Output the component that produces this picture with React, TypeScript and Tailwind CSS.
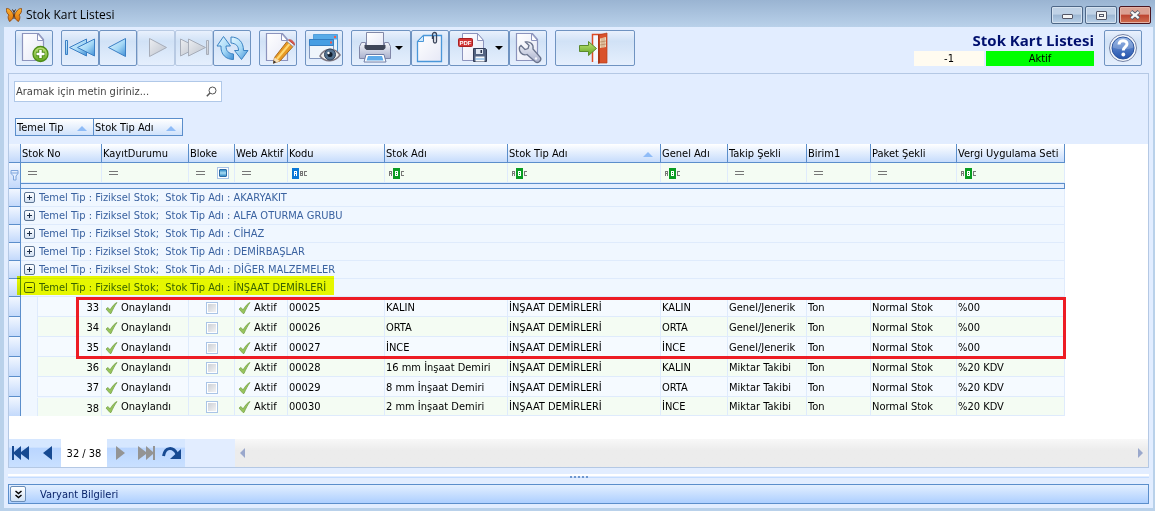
import React from "react";

type Kind = "eq" | "abcStart" | "abcMid" | "eqCheck";

const columns: { label: string; width: string; filter: Kind; sorted?: boolean }[] = [
  { label: "Stok No", width: "w-[81px]", filter: "eq" },
  { label: "KayıtDurumu", width: "w-[87px]", filter: "eq" },
  { label: "Bloke", width: "w-[46px]", filter: "eqCheck" },
  { label: "Web Aktif", width: "w-[53px]", filter: "eq" },
  { label: "Kodu", width: "w-[97px]", filter: "abcStart" },
  { label: "Stok Adı", width: "w-[123px]", filter: "abcMid" },
  { label: "Stok Tip Adı", width: "w-[153px]", filter: "abcMid", sorted: true },
  { label: "Genel Adı", width: "w-[67px]", filter: "abcMid" },
  { label: "Takip Şekli", width: "w-[79px]", filter: "eq" },
  { label: "Birim1", width: "w-[64px]", filter: "eq" },
  { label: "Paket Şekli", width: "w-[86px]", filter: "eq" },
  { label: "Vergi Uygulama Seti", width: "w-[108px]", filter: "abcMid" },
];

const groups = ["AKARYAKIT", "ALFA OTURMA GRUBU", "CİHAZ", "DEMİRBAŞLAR", "DİĞER MALZEMELER", "İNŞAAT DEMİRLERİ"];

const rows = [
  { no: 33, code: "00025", name: "KALIN", general: "KALIN", track: "Genel/Jenerik", tax: "%00" },
  { no: 34, code: "00026", name: "ORTA", general: "ORTA", track: "Genel/Jenerik", tax: "%00" },
  { no: 35, code: "00027", name: "İNCE", general: "İNCE", track: "Genel/Jenerik", tax: "%00" },
  { no: 36, code: "00028", name: "16 mm İnşaat Demiri", general: "KALIN", track: "Miktar Takibi", tax: "%20 KDV" },
  { no: 37, code: "00029", name: "8 mm İnşaat Demiri", general: "ORTA", track: "Miktar Takibi", tax: "%20 KDV" },
  { no: 38, code: "00030", name: "2 mm İnşaat Demiri", general: "İNCE", track: "Miktar Takibi", tax: "%20 KDV" },
];

function Gradients() {
  return (
    <svg width="0" height="0" className="absolute" aria-hidden="true">
      <defs>
        <linearGradient id="blue" x1="0" y1="0" x2="1" y2="1">
          <stop offset="0" stopColor="#e4f7ff" />
          <stop offset="0.55" stopColor="#a5d8f6" />
          <stop offset="1" stopColor="#3f8fd6" />
        </linearGradient>
        <linearGradient id="gray" x1="0" y1="0" x2="1" y2="1">
          <stop offset="0" stopColor="#eceef2" />
          <stop offset="1" stopColor="#bcc2cc" />
        </linearGradient>
        <linearGradient id="paper" x1="0" y1="0" x2="1" y2="1">
          <stop offset="0" stopColor="#ffffff" />
          <stop offset="1" stopColor="#e6e8f6" />
        </linearGradient>
        <linearGradient id="green" x1="0" y1="0" x2="0" y2="1">
          <stop offset="0" stopColor="#c3e57c" />
          <stop offset="1" stopColor="#5fa51d" />
        </linearGradient>
        <linearGradient id="metal" x1="0" y1="0" x2="0" y2="1">
          <stop offset="0" stopColor="#f4f6fb" />
          <stop offset="1" stopColor="#a9b0cc" />
        </linearGradient>
        <linearGradient id="help" x1="0" y1="0" x2="0" y2="1">
          <stop offset="0" stopColor="#7fa6e0" />
          <stop offset="1" stopColor="#2352ac" />
        </linearGradient>
        <linearGradient id="wing" x1="0" y1="0" x2="0" y2="1">
          <stop offset="0" stopColor="#ffb22e" />
          <stop offset="1" stopColor="#d9700c" />
        </linearGradient>
      </defs>
    </svg>
  );
}

function Icon({ children, w = 36 }: { children: React.ReactNode; w?: number }) {
  return (
    <svg width={w} height="34" viewBox={`0 0 ${w} 34`} aria-hidden="true" className="shrink-0">
      {children}
    </svg>
  );
}

const Page = () => (
  <>
    <path d="M6.5 2.5h16l5 6v21h-21z" fill="url(#paper)" stroke="#8c94bd" strokeWidth="1.2" />
    <path d="M21.500 2.500v7h6z" fill="#fff" stroke="#8c94bd" />
  </>
);

const NewIcon = () => (
  <Icon>
    <Page />
    <circle cx="24.500" cy="23" r="7.500" fill="url(#green)" stroke="#4c8b17" strokeWidth="1.300" />
    <path d="M24.500 18.500v9M20 23h9" stroke="#4c8b17" strokeWidth="4.500" />
    <path d="M24.500 19v8M20.500 23h8" stroke="#fff" strokeWidth="2.500" />
  </Icon>
);
const FirstIcon = () => (
  <Icon>
    <g fill="url(#blue)" stroke="#3b7fc4" strokeLinejoin="round">
      <path d="M3.500 9.500h2v14h-2z" />
      <path d="M24.500 8v17l-17-8.500z" />
      <path d="M32.500 8v17l-17-8.500z" />
    </g>
  </Icon>
);
const PrevIcon = () => (
  <Icon>
    <path d="M25.500 7.500v18l-17-9z" fill="url(#blue)" stroke="#3b7fc4" strokeLinejoin="round" />
  </Icon>
);
const NextIcon = () => (
  <Icon>
    <path d="M11.500 7.500v18l17-9z" fill="url(#gray)" stroke="#a7adb9" strokeLinejoin="round" />
  </Icon>
);
const LastIcon = () => (
  <Icon>
    <g fill="url(#gray)" stroke="#a7adb9" strokeLinejoin="round">
      <path d="M4.500 8v17l17-8.500z" />
      <path d="M12.500 8v17l17-8.500z" />
      <path d="M30.500 9.500h2v14h-2z" />
    </g>
  </Icon>
);
const RefreshIcon = () => (
  <Icon>
    <g fill="url(#blue)" stroke="#3b82c2" strokeLinejoin="round">
      <path d="M9.500 5.500l7 9.500h-4.500c0 5 2.500 7.500 7.500 8v5.500c-7.500 0-13-5-12.500-13.500h-4z" />
      <path d="M27.500 28.500l-7-9h4c0-4.500-2.500-7-7.500-7.500V6c7.500 0 12.500 5 12.500 13.500h4.500z" />
    </g>
  </Icon>
);
const EditIcon = () => (
  <Icon>
    <Page />
    <path d="M14.500 26.500L27 10.500l6 5L20 30l-6.500 2z" fill="#e89a24" stroke="#a86b22" />
    <path d="M17 28L29.500 13" stroke="#ffd873" strokeWidth="2" />
    <path d="M27 10.500l1.500-1.500 6 5-1.500 1.500z" fill="#eef0f4" stroke="#8890a8" strokeWidth="0.700" />
    <path d="M28.500 9c2-1.500 6.500 2 6 5z" fill="#e05548" stroke="#b8403a" strokeWidth="0.700" />
    <path d="M14.500 26.500L20 30l-6.500 2.500z" fill="#f6dfb4" />
    <path d="M13.800 29.500l2.500 1.800-3.300 1.500z" fill="#35302f" />
  </Icon>
);
const ViewIcon = () => (
  <Icon>
    <path d="M7.500 3.500h24v17h-24z" fill="#e2f1fb" stroke="#4c92ce" />
    <path d="M7.500 3.500h24v5h-24z" fill="#58abe8" />
    <path d="M3.500 8.500h24v19h-24z" fill="#eef5fb" stroke="#8096bd" />
    <path d="M3.500 8.500h24v6h-24z" fill="#459ee3" stroke="#347fc3" />
    <path d="M28 6h2M24 11.500h2" stroke="#f35b47" strokeWidth="2" />
    <path d="M14 25c4-8 15-9 20-1-5 7-15 8-20 1z" fill="#f2f0ef" stroke="#7c7680" strokeWidth="1.500" />
    <circle cx="24" cy="23.500" r="5.500" fill="#54718f" stroke="#31445d" />
    <circle cx="24" cy="23.500" r="2.500" fill="#111c2b" />
    <circle cx="22.500" cy="22" r="1.200" fill="#fff" />
  </Icon>
);
const PrintIcon = () => (
  <Icon w={40}>
    <path d="M9 15l3-5h16l3 5z" fill="#666c7d" />
    <path d="M6.500 11.500h4v6h19v-6h4l2 4v12h-31v-12z" fill="url(#metal)" stroke="#8187a8" />
    <path d="M11.500 1.500h17v14h-17z" fill="url(#paper)" stroke="#8289a8" />
    <path d="M9.500 14h21v3l-2 2h-17l-2-2z" fill="#3f4658" />
    <path d="M11 23.500h18l2 7.500H9z" fill="#fff" stroke="#6e7da6" />
    <path d="M13 25h14l1.500 4.500h-17z" fill="#5faae9" />
  </Icon>
);
const ClipIcon = () => (
  <Icon>
    <path d="M11.500 4.500h18v26h-24v-20z" fill="url(#paper)" stroke="#4a97d9" strokeWidth="1.300" />
    <path d="M5.500 10.500h6v-6z" fill="#cfe8fb" stroke="#4a97d9" />
    <path d="M20.500 8V3.500a2 2 0 0 1 4 0v7a1.500 1.500 0 0 1-3 0V5" fill="none" stroke="#39445a" strokeWidth="1.300" />
  </Icon>
);
const PdfIcon = () => (
  <Icon w={44}>
    <path d="M11.500 2.500h15l6 7v20h-21z" fill="url(#paper)" stroke="#8c94bd" />
    <path d="M26.500 2.500v7h6z" fill="#fff" stroke="#8c94bd" />
    <rect x="7.500" y="7.500" width="14" height="8" rx="1" fill="#d23636" stroke="#a92020" />
    <text x="14.500" y="14" textAnchor="middle" fontSize="6" fontWeight="700" fill="#fff" fontFamily="Liberation Sans, sans-serif">PDF</text>
    <path d="M22.500 17.500h12l1 1v12h-13z" fill="#526280" stroke="#323d57" />
    <path d="M25 18h7v5h-7z" fill="#dfe6f1" />
    <path d="M29.500 19h1.500v3h-1.500z" fill="#29334b" />
    <path d="M24.500 25.500h9v5h-9z" fill="#f6f8fb" />
    <path d="M24.500 27.500h9v1h-9z" fill="#59a1df" />
  </Icon>
);
const ToolIcon = () => (
  <Icon>
    <Page />
    <path d="M12 13.500l4 4 3-1 1-3-3.500-3.500c4-1 8.500 2 7.500 7l7.500 8.500c1.500 3-2.500 6-5 4.500l-8.500-7.500c-5 1.500-8.500-3-7.500-7.500z" transform="translate(-1 1)" fill="url(#metal)" stroke="#69738c" strokeWidth="1.300" />
    <circle cx="26" cy="27.500" r="1.200" fill="#f4f6fb" />
  </Icon>
);
const ExitIcon = () => (
  <Icon>
    <path d="M15.500 31V3.500h12V28" fill="#f3f8ff" stroke="#dd4b24" strokeWidth="1.500" />
    <path d="M22 4l8-2v30h-8z" fill="#d9532c" stroke="#b43c1b" strokeWidth="0.700" />
    <path d="M22 3l-1 1v29l2-1z" fill="#a93414" />
    <path d="M23 7.500l6-1.500v10l-6 1z" fill="#f1d8b7" />
    <path d="M23 11l6-1M23 14l6-1M25 7v10M27 7v9" stroke="#b4855d" strokeWidth="0.700" />
    <path d="M2.500 14.500h9v-4l8 7-8 7v-4h-9z" fill="url(#green)" stroke="#5a8b2d" strokeLinejoin="round" />
  </Icon>
);
const HelpIcon = () => (
  <Icon>
    <circle cx="18" cy="17" r="13.500" fill="#f4f7fc" stroke="#7382a5" />
    <circle cx="18" cy="17" r="11" fill="url(#help)" stroke="#2c559e" />
    <path d="M7.500 16.500a10.500 10 0 0 1 21 0q-10 4-21 0z" fill="#ffffff" opacity="0.200" />
    <path d="M14 13.500c0-5 8-5 8-.5 0 3-3.700 3-3.700 6.500" fill="none" stroke="#fff" strokeWidth="3" />
    <circle cx="18.300" cy="23.500" r="1.900" fill="#fff" />
  </Icon>
);

function ToolButton({ label, width = "w-[38px]", disabled, drop, children }: { label: string; width?: string; disabled?: boolean; drop?: boolean; children: React.ReactNode }) {
  return (
    <button
      type="button"
      aria-label={label}
      disabled={disabled}
      className={`${width} ${disabled ? "border-[#b8cae3]" : "border-[#6f93c1]"} flex h-9 items-center justify-center rounded-[2px] border bg-linear-to-b from-[#e9f1fd] from-0% via-[#d1e2f6] via-30% to-[#e5effd] to-100%`}
    >
      {children}
      {drop && <span className="mr-1 size-0 border-x-4 border-t-4 border-x-transparent border-t-black" />}
    </button>
  );
}

const Check = () => (
  <svg width="14" height="14" viewBox="0 0 14 14" className="shrink-0" aria-hidden="true">
    <path d="M1 8l2-1.500 2 2.500C7 5.500 9.500 2.500 12 1.500c-2.500 3.500-4 6.500-6 11h-1z" fill="#97c45c" stroke="#7aa54e" strokeWidth="0.800" strokeLinejoin="round" />
  </svg>
);

const SortMark = () => <span className="size-0 border-x-[5px] border-b-[5px] border-x-transparent border-b-[#8fbcf7]" />;

const Equals = () => <span className="h-1 w-[9px] shrink-0 border-y border-[#777]" />;

function Abc({ start }: { start?: boolean }) {
  return (
    <svg width="16" height="11" viewBox="0 0 16 11" shapeRendering="crispEdges" aria-label="ABC" role="img">
      <rect x={start ? 0 : 4} y="0" width="7" height="11" rx="1" fill={start ? "#0a78d6" : "#0a9c22"} />
      <g fill="none" strokeWidth="1">
        <path d={start ? "M2.500 8V3.500h2V8M2.500 5.500h2" : "M.5 8V3.500h2V8M.5 5.500h2"} stroke={start ? "#fff" : "#777"} />
        <path d={start ? "M8.500 3.500h2v4h-2zM8.500 5.500h2" : "M6.500 3.500h2v4h-2zM6.500 5.500h2"} stroke={start ? "#777" : "#fff"} />
        <path d="M15 3.500h-2.500v4H15" stroke="#777" />
      </g>
    </svg>
  );
}

function Filter({ kind }: { kind: Kind }) {
  if (kind === "abcStart") return <Abc start />;
  if (kind === "abcMid") return <Abc />;
  return (
    <div className="flex h-3 items-center gap-3 pl-[3px]">
      <Equals />
      {kind === "eqCheck" && (
        <span className="flex size-3 items-center justify-center border border-[#a9c4e6] bg-white">
          <span className="size-2 rounded-[1px] border border-[#2b6ba4] bg-linear-to-b from-[#2f8fc9] via-[#a8dcf2] to-[#2f8fc9]" />
        </span>
      )}
    </div>
  );
}

const marker = "border-r border-[#5b8ecb] bg-linear-to-b from-[#f2f7ff] to-[#c3d9fb] p-0";
const cell = "overflow-hidden border-r border-b border-[#dfebfc] px-px pt-0.5 pb-0 whitespace-nowrap";

function NavIcon({ d, dim, stroke }: { d: string; dim?: boolean; stroke?: boolean }) {
  const color = dim ? "#949494" : "#174a92";
  return (
    <svg width="22" height="16" viewBox="0 0 22 16" aria-hidden="true">
      <path d={d} fill={stroke ? "none" : color} stroke={stroke ? color : "none"} strokeWidth="3" />
      {stroke && <path d="M20 4v10H9z" fill={color} />}
    </svg>
  );
}

function NavButton({ label, width, ...icon }: { label: string; width: string; d: string; dim?: boolean; stroke?: boolean }) {
  return (
    <button type="button" aria-label={label} className={`${width} flex items-center justify-center bg-linear-to-b from-[#d6e7ff] from-30% via-[#b9d5ff] via-31% to-[#c9e0ff]`}>
      <NavIcon {...icon} />
    </button>
  );
}

export default function App() {
  return (
    <div className="flex min-h-screen flex-col bg-[#b9d1ea] pb-[3px] [font-family:'DejaVu_Sans_Condensed','Noto_Sans',sans-serif] text-[11px] leading-4 text-black">
      <Gradients />
      <header className="flex h-[27px] items-start justify-between bg-linear-to-b from-[#9ab4d2] to-[#b9d1ea] pr-1 pl-1.5">
        <div className="flex items-center gap-1 pt-[7px] [font-family:'Open_Sans',sans-serif] text-[12px]">
          <svg width="16" height="16" viewBox="0 0 16 16" aria-hidden="true">
            <path d="M7.500 8C6 4 3 1 .5 1.500 0 4 1 7 3 8c-1.500 1.500-1 4 .5 6.500C5.500 14 7 11 7.500 9z" fill="url(#wing)" stroke="#8a4208" strokeWidth="0.800" />
            <path d="M8.500 8c1.500-4 4.500-7 7-6.500C16 4 15 7 13 8c1.500 1.500 1 4-.5 6.500C10.500 14 9 11 8.500 9z" fill="url(#wing)" stroke="#8a4208" strokeWidth="0.800" />
            <path d="M8 5v7M8 5L6.500 2.500M8 5l1.500-2.500" stroke="#3c1d06" />
          </svg>
          <h1>Stok Kart Listesi</h1>
        </div>
        <div className="flex gap-0.5 pt-1.5">
          <button type="button" aria-label="Simge durumuna küçült" className="flex h-[18px] w-8 items-center justify-center rounded-[2px] border border-[#4e6787] bg-linear-to-b from-[#c0d2e6] from-45% via-[#9cb6d2] via-50% to-[#b9d0e8] shadow-[inset_0_0_0_1px_#d5e2f0]">
            <span className="mt-[3px] h-[5px] w-[11px] rounded-[1px] border border-[#535666] bg-[#f5f5f5]" />
          </button>
          <button type="button" aria-label="Ekranı kapla" className="flex h-[18px] w-8 items-center justify-center rounded-[2px] border border-[#4e6787] bg-linear-to-b from-[#c0d2e6] from-45% via-[#9cb6d2] via-50% to-[#b9d0e8] shadow-[inset_0_0_0_1px_#d5e2f0]">
            <span className="flex h-[9px] w-[11px] items-center justify-center rounded-[1px] border border-[#535666] bg-[#f5f5f5]">
              <span className="h-[3px] w-[5px] border border-[#535666]" />
            </span>
          </button>
          <button type="button" aria-label="Kapat" className="flex h-[18px] w-8 items-center justify-center rounded-[2px] border border-[#4b1520] bg-linear-to-b from-[#dba193] from-45% via-[#bd4430] via-50% to-[#cf6e50] shadow-[inset_0_0_0_1px_#e5b3a6]">
            <svg width="12" height="10" viewBox="0 0 12 10" aria-hidden="true">
              <path d="M2 1.500l8 7M10 1.500l-8 7" stroke="#535666" strokeWidth="4" />
              <path d="M2.300 1.800l7.400 6.400M9.700 1.800L2.300 8.200" stroke="#f7f7f7" strokeWidth="2.300" />
            </svg>
          </button>
        </div>
      </header>

      <main className="mr-0.5 ml-1 flex flex-1 flex-col bg-[#e2edff] px-1 pb-1">
        <div className="flex h-[46px] items-start pt-[3px] pr-[7px] pl-[7px]">
          <div className="flex gap-2">
            <ToolButton label="Yeni"><NewIcon /></ToolButton>
            <div className="flex">
              <ToolButton label="İlk"><FirstIcon /></ToolButton>
              <ToolButton label="Önceki"><PrevIcon /></ToolButton>
              <ToolButton label="Sonraki" disabled><NextIcon /></ToolButton>
              <ToolButton label="Son" disabled><LastIcon /></ToolButton>
              <ToolButton label="Yenile"><RefreshIcon /></ToolButton>
            </div>
            <ToolButton label="Düzenle"><EditIcon /></ToolButton>
            <ToolButton label="Görünüm"><ViewIcon /></ToolButton>
            <div className="flex">
              <ToolButton label="Yazdır" width="w-[60px]" drop><PrintIcon /></ToolButton>
              <ToolButton label="Ekler"><ClipIcon /></ToolButton>
              <ToolButton label="PDF kaydet" width="w-[60px]" drop><PdfIcon /></ToolButton>
              <ToolButton label="Ayarlar"><ToolIcon /></ToolButton>
            </div>
            <ToolButton label="Çıkış" width="w-[80px]"><ExitIcon /></ToolButton>
          </div>
          <div className="ml-auto flex gap-2.5">
            <div className="flex flex-col">
              <h2 className="h-[21px] text-right [font-family:'Open_Sans',sans-serif] text-[15px] leading-5 font-bold text-[#00106e]">Stok Kart Listesi</h2>
              <div className="flex gap-0.5 text-center leading-4">
                <span className="h-[15px] w-[70px] bg-[#fffbf0]">-1</span>
                <span className="h-[15px] w-[108px] bg-[#00ff00]">Aktif</span>
              </div>
            </div>
            <ToolButton label="Yardım"><HelpIcon /></ToolButton>
          </div>
        </div>

        <section className="flex flex-1 flex-col border border-[#b4c8e4] bg-white">
          <div className="flex h-[70px] flex-col items-start gap-4 bg-[#e2edff] pt-[7px] pl-[5px]">
            <label className="flex h-[21px] w-[208px] items-center border border-[#b0c8e8] bg-white pr-1">
              <input type="text" aria-label="Arama" placeholder="Aramak için metin giriniz..." className="min-w-0 flex-1 px-px outline-none placeholder:text-[#444]" />
              <svg width="11" height="11" viewBox="0 0 11 11" fill="none" stroke="#555" aria-hidden="true">
                <circle cx="6.500" cy="4.500" r="3.500" />
                <path d="M4 7L.8 10.200" strokeWidth="1.500" />
              </svg>
            </label>
            <div className="ml-px flex h-[18px] border border-[#5b8ecb] bg-linear-to-b from-white to-[#d0e2fb]">
              <div className="flex w-[78px] items-center justify-between border-r border-[#5b8ecb] pt-0.5 pr-1.5 pl-px">Temel Tip<SortMark /></div>
              <div className="flex w-[88px] items-center justify-between pt-0.5 pr-1.5 pl-px">Stok Tip Adı<SortMark /></div>
            </div>
          </div>

          <div className="relative flex-1">
            <table className="w-[1056px] table-fixed border-separate border-spacing-0 text-left">
              <colgroup>
                <col className="w-3" />
                {columns.map((c) => <col key={c.label} className={c.width} />)}
              </colgroup>
              <thead>
                <tr>
                  <th className={`${marker} h-[19px] border-b`} />
                  {columns.map((c) => (
                    <th key={c.label} className="h-[19px] border-r border-b border-[#5b8ecb] bg-linear-to-b from-white to-[#c6dcfc] px-px pt-0.5 pb-0 font-normal whitespace-nowrap">
                      <div className="flex items-center justify-between leading-4">
                        {c.label}
                        {c.sorted && <span className="flex pr-1.5"><SortMark /></span>}
                      </div>
                    </th>
                  ))}
                </tr>
                <tr>
                  <td rowSpan={2} className={`${marker} border-b`}>
                    <svg width="9" height="11" viewBox="0 0 9 11" className="mx-px" fill="#e3eeff" stroke="#7da4dc" aria-hidden="true">
                      <path d="M1 .5h7v3L6 6v4H3.500V6L1 3.500zM1 3h7" />
                    </svg>
                  </td>
                  {columns.map((c) => (
                    <td key={c.label} className="h-5 border-r border-b border-[#dfebfc] bg-[#f4fcf3] px-1 pt-px pb-0">
                      <Filter kind={c.filter} />
                    </td>
                  ))}
                </tr>
                <tr>
                  <td colSpan={12} className="h-1.5 border-y border-r border-[#5b8ecb] bg-[#e3eeff] p-0" />
                </tr>
              </thead>
              <tbody>
                {groups.map((g, i) => (
                  <tr key={g}>
                    <td className={`${marker} h-[18px] border-b`} />
                    <td colSpan={12} className="h-[18px] border-r border-b border-[#dfebfc] bg-[#f0f7ff] px-[3px] py-0 text-[#3a62a0]">
                      <div className="flex h-[17px] items-center gap-1">
                        <button type="button" aria-label={g} aria-expanded={i === 5} className="relative size-[11px] rounded-[2px] border border-[#5b7392] bg-linear-to-b from-white to-[#d3e1f2]">
                          <span className="absolute top-1 left-0.5 h-px w-[5px] bg-[#1c2e48]" />
                          {i !== 5 && <span className="absolute top-0.5 left-1 h-[5px] w-px bg-[#1c2e48]" />}
                        </button>
                        <span className="pt-px whitespace-pre">{`Temel Tip : Fiziksel Stok;  Stok Tip Adı : ${g}`}</span>
                      </div>
                    </td>
                  </tr>
                ))}
                {rows.map((r, i) => (
                  <tr key={r.no} className={`${i % 2 ? "bg-[#f4fcf3]" : "bg-[#f5faff]"} ${i < 5 ? "h-5" : "h-[18px]"}`}>
                    <td className={`${marker} ${i < 5 ? "border-b" : ""}`} />
                    <td className="border-r border-[#dfebfc] bg-[#f0f7ff] p-0 pl-4">
                      <div className={`${i % 2 ? "bg-[#f4fcf3]" : "bg-[#f5faff]"} ${i < 5 ? "h-5 border-b" : "h-[18px]"} border-l border-[#dfebfc] pt-px pr-0.5 text-right leading-5`}>{r.no}</div>
                    </td>
                    <td className={cell}><div className="flex items-center gap-0.5 pl-0.5"><Check />Onaylandı</div></td>
                    <td className={cell}>
                      <input type="checkbox" aria-label={`Bloke ${r.no}`} className="mx-auto block size-3 appearance-none border border-[#a9c4e6] bg-linear-to-br from-[#c8ccd3] to-[#f7f7f7] shadow-[inset_0_0_0_1px_white]" />
                    </td>
                    <td className={cell}><div className="flex items-center gap-0.5 pl-0.5"><Check />Aktif</div></td>
                    <td className={cell}>{r.code}</td>
                    <td className={cell}>{r.name}</td>
                    <td className={cell}>İNŞAAT DEMİRLERİ</td>
                    <td className={cell}>{r.general}</td>
                    <td className={cell}>{r.track}</td>
                    <td className={cell}>Ton</td>
                    <td className={cell}>Normal Stok</td>
                    <td className={cell}>{r.tax}</td>
                  </tr>
                ))}
              </tbody>
            </table>
            <div className="pointer-events-none absolute top-[132px] left-2 h-[19px] w-[317px] bg-[#f5ff00] mix-blend-multiply" />
            <div className="pointer-events-none absolute top-[153px] left-[67px] h-[62px] w-[990px] border-3 border-[#ed1c24]" />
          </div>

          <footer className="flex h-7 bg-[#e2edff]">
            <NavButton label="İlk kayıt" width="w-[26px]" d="M1 1h2v6l7-6v6l8-6v14l-8-6v6L3 9v6H1z" />
            <NavButton label="Önceki kayıt" width="w-[26px]" d="M15 1v14L6 8z" />
            <span className="w-[46px] bg-white pt-px text-center leading-7">32 / 38</span>
            <NavButton label="Sonraki kayıt" width="w-[26px]" dim d="M7 1v14l9-7z" />
            <NavButton label="Son kayıt" width="w-[26px]" dim d="M20 1h-2v6l-7-6v6L3 1v14l8-6v6l7-6v6h2z" />
            <NavButton label="Git" width="w-[26px]" stroke d="M2.500 11C4 2 12 1 16 9" />
            <div className="ml-[50px] flex flex-1 items-center justify-between bg-linear-to-b from-[#f8f8f8] to-[#ececec] to-40% px-[5px]">
              <button type="button" aria-label="Sola kaydır" className="size-0 border-y-[5px] border-r-[5px] border-y-transparent border-r-[#9aa8cc]" />
              <button type="button" aria-label="Sağa kaydır" className="size-0 border-y-[5px] border-l-[5px] border-y-transparent border-l-[#9aa8cc]" />
            </div>
          </footer>
        </section>

        <div className="my-1.5 flex h-1 items-center justify-center border-t-2 border-b border-t-white border-b-[#c3dcff]">
          <span className="flex gap-0.5">
            {[0, 1, 2, 3, 4].map((n) => <span key={n} className="size-0.5 bg-[#6e97cf]" />)}
          </span>
        </div>

        <div className="flex h-5 items-center gap-3.5 border border-[#5b8ecb] bg-linear-to-b from-[#e3efff] to-[#adcfff] pl-px text-[#0a246a]">
          <button type="button" aria-label="Genişlet" className="flex size-4 items-center justify-center rounded-[2px] border border-[#6a8db8] bg-linear-to-b from-white to-[#cfe1f5]">
            <svg width="7" height="9" viewBox="0 0 7 9" fill="none" stroke="#000" strokeWidth="1.500" aria-hidden="true">
              <path d="M.5 1l3 2.500L6.500 1M.5 5l3 2.500L6.500 5" />
            </svg>
          </button>
          <span className="pt-0.5">Varyant Bilgileri</span>
        </div>
      </main>
    </div>
  );
}
